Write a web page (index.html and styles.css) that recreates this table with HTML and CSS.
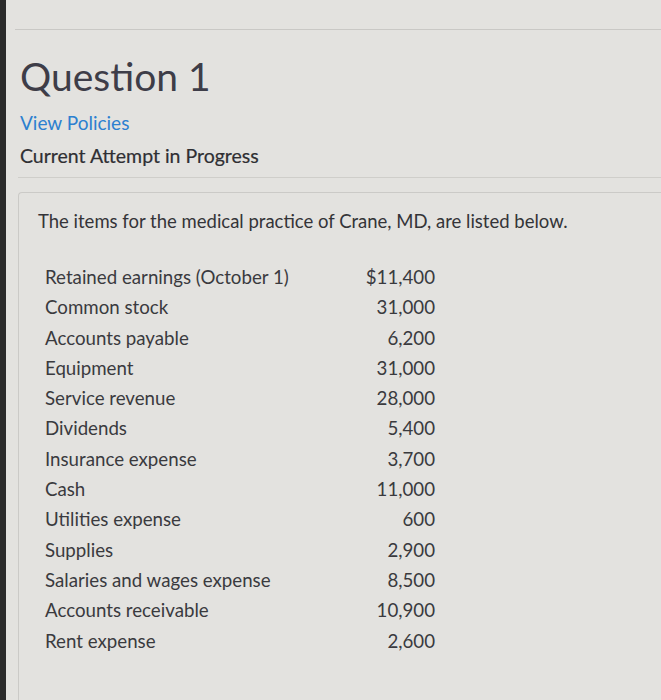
FILE: index.html
```html
<!DOCTYPE html>
<html>
<head>
<meta charset="utf-8">
<link rel="stylesheet" href="styles.css">
</head>
<body>
<div class="page">
  <div class="topline"></div>
  <h1 class="title">Question 1</h1>
  <a class="policies" href="#">View Policies</a>
  <div class="attempt">Current Attempt in Progress</div>
  <div class="divider"></div>
  <div class="card">
    <p class="intro">The items for the medical practice of Crane, MD, are listed below.</p>
    <div class="items">
      <span class="label">Retained earnings (October 1)</span><span class="value">$11,400</span>
      <span class="label">Common stock</span><span class="value">31,000</span>
      <span class="label">Accounts payable</span><span class="value">6,200</span>
      <span class="label">Equipment</span><span class="value">31,000</span>
      <span class="label">Service revenue</span><span class="value">28,000</span>
      <span class="label">Dividends</span><span class="value">5,400</span>
      <span class="label">Insurance expense</span><span class="value">3,700</span>
      <span class="label">Cash</span><span class="value">11,000</span>
      <span class="label">Utilities expense</span><span class="value">600</span>
      <span class="label">Supplies</span><span class="value">2,900</span>
      <span class="label">Salaries and wages expense</span><span class="value">8,500</span>
      <span class="label">Accounts receivable</span><span class="value">10,900</span>
      <span class="label">Rent expense</span><span class="value">2,600</span>
    </div>
  </div>
</div>
</body>
</html>
```

FILE: styles.css
```css
html, body {
  margin: 0;
  padding: 0;
}
body {
  background: #e3e2df;
  font-family: Lato, "Open Sans", sans-serif;
  color: #3b3b40;
  width: 661px;
  height: 700px;
  overflow: hidden;
}
.page {
  border-left: 6px solid #2a2a2a;
  height: 700px;
  box-sizing: border-box;
  padding-left: 9px;
  padding-top: 29px;
}
.topline {
  height: 1px;
  background: #c9c8c5;
}
.title {
  margin: 24px 0 0 5px;
  font-size: 39px;
  font-weight: 400;
  line-height: 44px;
  color: #3e3d48;
}
.policies {
  display: block;
  margin: 13px 0 0 5px;
  font-size: 19px;
  line-height: 24px;
  color: #2c80d0;
  text-decoration: none;
}
.attempt {
  margin: 9px 0 0 5px;
  font-size: 19.5px;
  line-height: 24px;
  color: #2f2f33;
  -webkit-text-stroke: 0.2px #2f2f33;
}
.divider {
  height: 1px;
  background: #cfceca;
  margin-top: 9px;
  margin-left: 3px;
}
.card {
  margin: 14px 0 0 3px;
  border: 1px solid #cbcac7;
  border-right: none;
  border-radius: 4px 0 0 4px;
  height: 520px;
  padding: 16px 0 0 19px;
  box-sizing: border-box;
}
.intro {
  margin: 0;
  font-size: 18.5px;
  line-height: 24px;
  color: #343438;
}
.items {
  display: grid;
  grid-template-columns: 300px 90px;
  margin: 32px 0 0 7px;
  row-gap: 6.3px;
  font-size: 18.7px;
  line-height: 24px;
  color: #3a3a3e;
}
.label {
  white-space: nowrap;
}
.value {
  text-align: right;
}
```
